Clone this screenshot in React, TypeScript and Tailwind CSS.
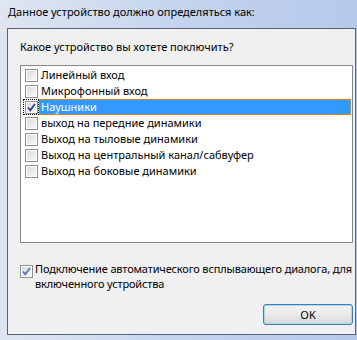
import React from "react";

const items = [
  "Линейный вход",
  "Микрофонный вход",
  "Наушники",
  "выход на передние динамики",
  "Выход на тыловые динамики",
  "Выход на центральный канал/сабвуфер",
  "Выход на боковые динамики",
];

const Check = ({ checked, dim }: { checked?: boolean; dim?: boolean }) => (
  <span className="relative block w-[13px] h-[13px] shrink-0 border border-[#8e8f8f] bg-white p-px">
    <span className="block w-full h-full bg-gradient-to-br from-[#dcdcdc] to-[#f8f8f8]" />
    {checked && (
      <svg className="absolute left-0 top-0" width="11" height="11" viewBox="0 0 11 11">
        <path
          d="M2 5.5 L4.3 8.3 L9 2"
          fill="none"
          stroke={dim ? "#5a74b8" : "#2a3f8f"}
          strokeWidth="1.8"
        />
      </svg>
    )}
  </span>
);

export default function App() {
  return (
    <div
      className="w-[357px] h-[340px] overflow-hidden flex flex-col bg-gradient-to-r from-[#dfe6f1] via-[#c4d4ee] to-[#b5c9ea]"
      style={{ fontFamily: '"Noto Sans", "Open Sans", sans-serif' }}
    >
      <div className="h-[28px] shrink-0 pl-[8px] pt-[3px] text-[11px] leading-[18px] text-black whitespace-nowrap">
        Данное устройство должно определяться как:
      </div>
      <div className="ml-[7px] mr-[1px] mb-[5px] flex-1 border border-[#54627a] bg-[#f0f0f0] flex flex-col text-[11px] text-black">
        <div className="pl-[12px] pt-[10px] leading-[16px]">Какое устройство вы хотете поключить?</div>
        <div className="ml-[12px] mr-[2px] mt-[10px] h-[178px] border border-[#828790] bg-white py-px pl-px">
          {items.map((t, i) => {
            const sel = i === 2;
            return (
              <div key={t} className="h-[16px] flex items-center pl-[1px]">
                <span
                  className={`h-[16px] w-[16px] shrink-0 flex items-center justify-center ${
                    sel ? "border border-dotted border-black" : ""
                  }`}
                >
                  <Check checked={sel} />
                </span>
                <span
                  className={`h-[16px] flex-1 flex items-center leading-[14px] whitespace-nowrap ${
                    sel ? "bg-[#3399ff] text-white border border-dotted border-[#e08a2a] pl-[1px] mr-[1px]" : "pl-[2px]"
                  }`}
                >
                  {t}
                </span>
              </div>
            );
          })}
        </div>
        <div className="mt-[17px] pl-[12px] flex items-start gap-[2px]">
          <span className="mt-[5px] shrink-0">
            <Check checked dim />
          </span>
          <div className="leading-[15px] pt-px whitespace-nowrap tracking-[-0.15px]">
            Подключение автоматического всплывающего диалога, для
            <br />
            включенного устройства
          </div>
        </div>
        <div className="flex justify-end mt-[13px] mr-[2px]">
          <button className="w-[90px] h-[21px] rounded-[3px] border border-[#3c7fb1] bg-gradient-to-b from-[#f2f2f2] via-[#ebebeb] to-[#d8d8d8] text-[11px] leading-[16px] text-black shadow-[inset_0_0_0_1px_#a6dbf6]">
            OK
          </button>
        </div>
      </div>
    </div>
  );
}
